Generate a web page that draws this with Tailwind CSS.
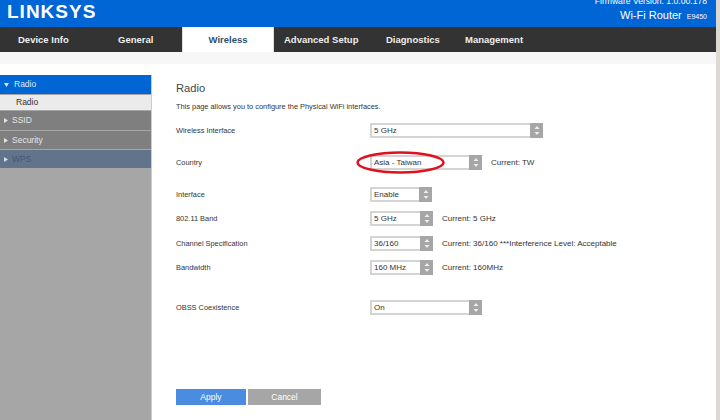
<!DOCTYPE html>
<html lang="en">
<head>
    <meta charset="UTF-8">
    <title>Wi-Fi Router E9450</title>
    <script src="https://cdn.jsdelivr.net/npm/@tailwindcss/browser@4"></script>
</head>
<body class="relative w-[720px] h-[420px] overflow-hidden bg-white font-['Liberation_Sans',Arial,sans-serif] text-[#333]">
    <!-- top bar -->
    <div class="w-[716px] h-[27px] bg-[#0066d6] flex justify-between text-white overflow-hidden">
        <div class="pl-[7px] pt-[0px] text-[19px] leading-[23px] font-bold tracking-[1px]">LINKSYS</div>
        <div class="pr-[9px] flex flex-col items-end -mt-[4px]">
            <div class="text-[8.6px] leading-[10px] whitespace-nowrap">Firmware Version: 1.0.00.178</div>
            <div class="flex items-baseline gap-[5px] mt-[1px]">
                <span class="text-[11px] leading-[16px]">Wi-Fi Router</span>
                <span class="text-[7px]">E9450</span>
            </div>
        </div>
    </div>

    <!-- tabs -->
    <nav class="w-[716px] h-[25px] bg-[#333] flex text-[#eee] text-[9.5px] font-bold whitespace-nowrap">
        <a class="w-[91px] pl-[18px] leading-[25px]">Device Info</a>
        <a class="w-[91px] pl-[27px] leading-[25px]">General</a>
        <a class="w-[92px] bg-white text-[#2f4f6f] text-center leading-[25px] border-x border-[#ddd]">Wireless</a>
        <a class="w-[102px] pl-[10px] leading-[25px]">Advanced Setup</a>
        <a class="w-[89px] pl-[10px] leading-[25px]">Diagnostics</a>
        <a class="leading-[25px]">Management</a>
    </nav>
    <div class="w-[716px] h-[12px] bg-[#f7f7f7]"></div>

    <div class="flex h-[356px]">
        <!-- side menu -->
        <aside class="w-[152px] mt-[11px] bg-[#a6a6a6] border-r border-[#ccc] text-[8.5px] flex flex-col">
            <div class="h-[19px] bg-[#0066d6] text-[#dce9f8] flex items-center pl-[4px] gap-[5px]">
                <svg width="5" height="4" viewBox="0 0 5 4"><path d="M0 0h5L2.5 4z" fill="#dce9f8"/></svg>
                <span>Radio</span>
            </div>
            <div class="h-[15px] mt-[1px] bg-[#ebebeb] text-[#333] pl-[16px] leading-[15px]">Radio</div>
            <div class="h-[19px] mt-[1px] bg-[#7f7f7f] text-[#e4e4e4] flex items-center pl-[4px] gap-[4px]">
                <svg width="4" height="5" viewBox="0 0 4 5"><path d="M0 0l4 2.5L0 5z" fill="#e4e4e4"/></svg>
                <span>SSID</span>
            </div>
            <div class="h-[18px] mt-[1px] bg-[#7f7f7f] text-[#e4e4e4] flex items-center pl-[4px] gap-[4px]">
                <svg width="4" height="5" viewBox="0 0 4 5"><path d="M0 0l4 2.5L0 5z" fill="#e4e4e4"/></svg>
                <span>Security</span>
            </div>
            <div class="h-[18px] mt-[1px] bg-[#62748c] text-[#40597a] flex items-center pl-[4px] gap-[4px]">
                <svg width="4" height="5" viewBox="0 0 4 5"><path d="M0 0l4 2.5L0 5z" fill="#d8dde4"/></svg>
                <span>WPS</span>
            </div>
        </aside>

        <!-- form -->
        <main class="pl-[24px] text-[7.4px] flex flex-col">
            <h1 class="mt-[17px] text-[11.2px] leading-[15px] text-[#444]">Radio</h1>
            <p class="mt-[5px] leading-[11px]">This page allows you to configure the Physical WiFi interfaces.</p>

            <div class="mt-[11px] h-[15px] flex items-center">
                <label class="w-[194px]">Wireless Interface</label>
                <div class="w-[173px] h-[15px] bg-white border-2 border-[#d4d4d4] flex text-[8px]">
                    <span class="flex-1 pl-[2px] leading-[11px]">5 GHz</span>
                    <span class="w-[13px] -my-[2px] -mr-[2px] bg-[#a6a6a6] flex items-center justify-center"><svg width="6" height="9" viewBox="0 0 6 9"><path d="M3 0l2.5 3h-5zM3 9L.5 6h5z" fill="#eee"/></svg></span>
                </div>
            </div>

            <div class="mt-[17px] h-[15px] flex items-center">
                <label class="w-[194px]">Country</label>
                <div class="w-[112px] h-[15px] bg-white border-2 border-[#d4d4d4] flex text-[8px]">
                    <span class="flex-1 pl-[2px] leading-[11px]">Asia - Taiwan</span>
                    <span class="w-[13px] -my-[2px] -mr-[2px] bg-[#a6a6a6] flex items-center justify-center"><svg width="6" height="9" viewBox="0 0 6 9"><path d="M3 0l2.5 3h-5zM3 9L.5 6h5z" fill="#eee"/></svg></span>
                </div>
                <span class="ml-[9px] text-[8px]">Current: TW</span>
            </div>

            <div class="mt-[17px] h-[15px] flex items-center">
                <label class="w-[194px]">Interface</label>
                <div class="w-[62px] h-[15px] bg-white border-2 border-[#d4d4d4] flex text-[8px]">
                    <span class="flex-1 pl-[2px] leading-[11px]">Enable</span>
                    <span class="w-[13px] -my-[2px] -mr-[2px] bg-[#a6a6a6] flex items-center justify-center"><svg width="6" height="9" viewBox="0 0 6 9"><path d="M3 0l2.5 3h-5zM3 9L.5 6h5z" fill="#eee"/></svg></span>
                </div>
            </div>

            <div class="mt-[9px] h-[15px] flex items-center">
                <label class="w-[194px]">802.11 Band</label>
                <div class="w-[63px] h-[15px] bg-white border-2 border-[#d4d4d4] flex text-[8px]">
                    <span class="flex-1 pl-[2px] leading-[11px]">5 GHz</span>
                    <span class="w-[13px] -my-[2px] -mr-[2px] bg-[#a6a6a6] flex items-center justify-center"><svg width="6" height="9" viewBox="0 0 6 9"><path d="M3 0l2.5 3h-5zM3 9L.5 6h5z" fill="#eee"/></svg></span>
                </div>
                <span class="ml-[9px] text-[8px]">Current: 5 GHz</span>
            </div>

            <div class="mt-[10px] h-[15px] flex items-center">
                <label class="w-[194px]">Channel Specification</label>
                <div class="w-[63px] h-[15px] bg-white border-2 border-[#d4d4d4] flex text-[8px]">
                    <span class="flex-1 pl-[2px] leading-[11px]">36/160</span>
                    <span class="w-[13px] -my-[2px] -mr-[2px] bg-[#a6a6a6] flex items-center justify-center"><svg width="6" height="9" viewBox="0 0 6 9"><path d="M3 0l2.5 3h-5zM3 9L.5 6h5z" fill="#eee"/></svg></span>
                </div>
                <span class="ml-[9px] text-[8px]">Current: 36/160 ***Interference Level: Acceptable</span>
            </div>

            <div class="mt-[9px] h-[15px] flex items-center">
                <label class="w-[194px]">Bandwidth</label>
                <div class="w-[63px] h-[15px] bg-white border-2 border-[#d4d4d4] flex text-[8px]">
                    <span class="flex-1 pl-[2px] leading-[11px]">160 MHz</span>
                    <span class="w-[13px] -my-[2px] -mr-[2px] bg-[#a6a6a6] flex items-center justify-center"><svg width="6" height="9" viewBox="0 0 6 9"><path d="M3 0l2.5 3h-5zM3 9L.5 6h5z" fill="#eee"/></svg></span>
                </div>
                <span class="ml-[9px] text-[8px]">Current: 160MHz</span>
            </div>

            <div class="mt-[25px] h-[15px] flex items-center">
                <label class="w-[194px]">OBSS Coexistence</label>
                <div class="w-[112px] h-[15px] bg-white border-2 border-[#d4d4d4] flex text-[8px]">
                    <span class="flex-1 pl-[2px] leading-[11px]">On</span>
                    <span class="w-[13px] -my-[2px] -mr-[2px] bg-[#a6a6a6] flex items-center justify-center"><svg width="6" height="9" viewBox="0 0 6 9"><path d="M3 0l2.5 3h-5zM3 9L.5 6h5z" fill="#eee"/></svg></span>
                </div>
            </div>

            <div class="mt-[74px] flex gap-[2px] text-[8.5px] text-white">
                <button class="w-[70px] h-[16px] bg-[#4a8de0]">Apply</button>
                <button class="w-[73px] h-[16px] bg-[#a6a6a6]">Cancel</button>
            </div>
        </main>
    </div>

    <!-- window edge on the right -->
    <div class="absolute right-0 top-0 w-[4px] h-[420px] bg-[#dcd8d2]"></div>

    <!-- red marker drawn over the country select -->
    <svg class="absolute left-[356px] top-[151px]" width="90" height="23" viewBox="0 0 90 23">
        <ellipse cx="44.5" cy="11.5" rx="43" ry="10" fill="none" stroke="#e0101c" stroke-width="2.5"/>
    </svg>
</body>
</html>
